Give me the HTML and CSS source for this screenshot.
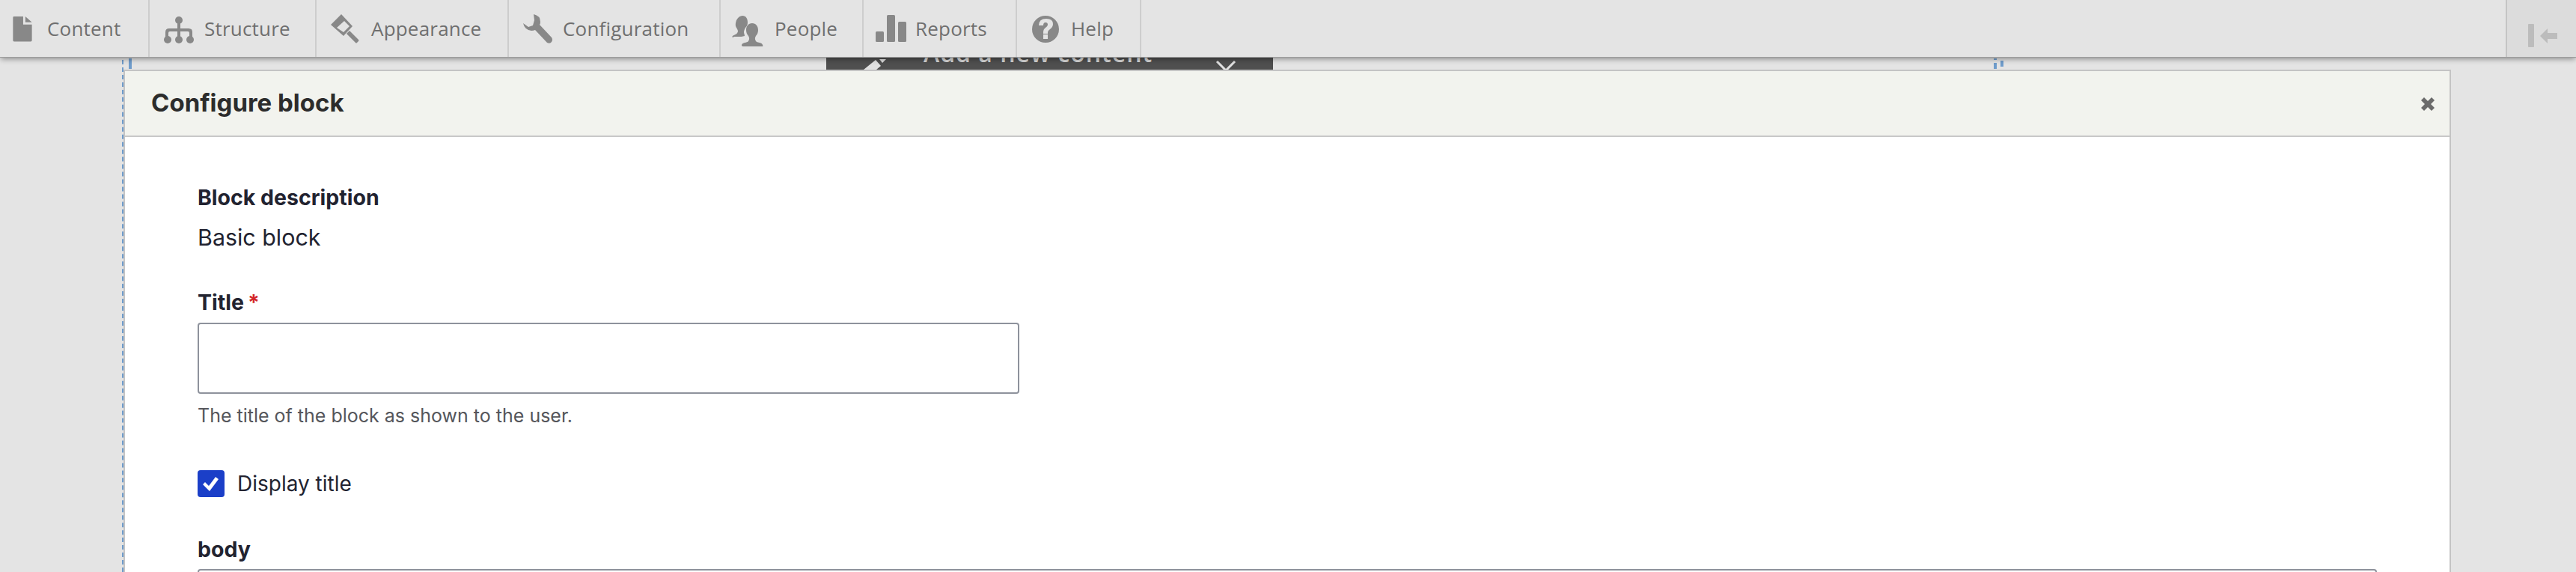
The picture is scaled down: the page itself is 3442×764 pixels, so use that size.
FILE: index.html
```html
<!DOCTYPE html>
<html lang="en">
<head>
  <meta charset="UTF-8">
  <title>Configure block</title>
  <link rel="stylesheet" href="styles.css">
</head>
<body>

  <nav class="toolbar">
    <a class="tab tab-content">
      <svg class="icon" viewBox="0 0 26 36"><path d="M1 0H14V11H26V33a1.500 1.500 0 0 1-1.500 1.500H1.500A1.500 1.500 0 0 1 0 33V1.500A1.500 1.500 0 0 1 1 0ZM17 0L26 8H17Z"/></svg>
      Content
    </a>
    <a class="tab tab-structure">
      <svg class="icon" viewBox="0 0 40 38"><circle cx="20" cy="6" r="5"/><circle cx="5" cy="32" r="5"/><circle cx="20" cy="32" r="5"/><circle cx="35" cy="32" r="5"/><path d="M18 8h4v9h11q5 0 5 5v6h-4v-5q0-2-2-2H22v7h-4v-7H8q-2 0-2 2v5H2v-6q0-5 5-5h11Z"/></svg>
      Structure
    </a>
    <a class="tab tab-appearance">
      <svg class="icon" viewBox="0 0 38 39"><path fill-rule="evenodd" d="M14 0L0 14 17 29 29 16ZM8 18L18 9 25 16 17 24Z"/><path d="M21 26l4-4 12 12q1 1 0 2l-2 2q-1 1-2 0Z"/></svg>
      Appearance
    </a>
    <a class="tab tab-config">
      <svg class="icon" viewBox="0 0 39 39"><path d="M14 0q9 2 9 10 0 3-1 4l16 17q2 3 0 6t-6 1L16 21q-2 1-5 1Q2 21 0 12l7 5 6-2 2-7Z"/></svg>
      Configuration
    </a>
    <a class="tab tab-people">
      <svg class="icon" viewBox="0 0 42 41"><path d="M14 0c5 0 7 4 7 9 0 3-1 5-3 7-1 2-2 4-2 6 0 2 1 3 1 5-3 1-6 1-8 1H3C0 30 0 28 1 27c3-2 6-2 7-6 0-2-1-3-2-5-2-3-1-7 0-10 2-4 5-6 8-6Z"/><path d="M27 10c5 0 8 4 8 9 0 3-1 6-3 8-2 3-1 6 1 8 3 1 7 1 8 4 1 2 0 2-2 2H16c-3 0-3-1-3-2 1-3 5-3 8-4 2-2 3-5 1-8-2-2-3-5-3-8 0-5 3-9 8-9Z"/></svg>
      People
    </a>
    <a class="tab tab-reports">
      <svg class="icon" viewBox="0 0 41 36"><rect x="0" y="22" width="11" height="14" rx="1.500"/><rect x="15" y="0" width="11" height="36" rx="1.500"/><rect x="30" y="9" width="11" height="27" rx="1.500"/></svg>
      Reports
    </a>
    <a class="tab tab-help">
      <svg class="icon" viewBox="0 0 36 36"><path fill-rule="evenodd" d="M18 0a18 18 0 1 1 0 36a18 18 0 1 1 0-36ZM9 13h6q0-4 3-4 3 0 3 3 0 2-3 4-3 2-3 6v2h6v-2q0-2 3-4 4-3 4-7 0-7-9-7-10 0-10 9ZM15 25v6h6v-6Z"/></svg>
      Help
    </a>
    <button class="collapse">
      <svg viewBox="0 0 39 31"><rect x="0" y="0" width="8" height="31" rx="1"/><path d="M16 16L26 6v6h13v8H26v6Z"/></svg>
    </button>
  </nav>

  <div class="stage">
    <div class="block-outline"></div>
    <span class="tick tick-1"></span>
    <span class="tick tick-2"></span>
    <span class="tick tick-3"></span>
    <span class="tick tick-4"></span>
    <div class="add-content">
      <svg class="pencil" viewBox="0 0 34 17"><path d="M0 17L16 4 23 12 17 17ZM21 3H30L25 8Z"/></svg>
      <span class="add-label">Add a new content</span>
      <svg class="chevron" viewBox="0 0 28 14"><path d="M2 1l12 12L26 1"/></svg>
    </div>

    <div class="dialog">
      <header class="dialog-head">
        <h2>Configure block</h2>
        <button class="dialog-close">
          <svg viewBox="0 0 20 20"><path d="M1 5l4-4 5 5 5-5 4 4-5 5 5 5-4 4-5-5-5 5-4-4 5-5Z"/></svg>
        </button>
      </header>
      <form class="dialog-body">
        <div class="field field-desc">
          <div class="label">Block description</div>
          <div class="value">Basic block</div>
        </div>
        <div class="field field-title">
          <label class="label">Title<span class="req">*</span></label>
          <input class="text-input" type="text">
          <div class="help">The title of the block as shown to the user.</div>
        </div>
        <div class="field field-check">
          <span class="checkbox">
            <svg viewBox="0 0 36 36"><path d="M7 19l3-3 5 5L24 9l4 3-12 16Z"/></svg>
          </span>
          <label class="check-label">Display title</label>
        </div>
        <div class="field">
          <label class="label">body</label>
          <div class="editor"></div>
        </div>
      </form>
    </div>
  </div>

</body>
</html>
```

FILE: styles.css
```css
html, body {
  height: 100%;
}

body {
  display: flex;
  flex-direction: column;
  margin: 0;
  overflow: hidden;
  background: #e4e4e4;
  font-family: 'Inter', sans-serif;
  color: #222330;
}

.toolbar {
  display: flex;
  flex: none;
  position: relative;
  z-index: 3;
  height: 76px;
  background: #e4e4e4;
  box-shadow: 0 1px 0 #9c9c9c, 0 4px 7px -1px rgba(0, 0, 0, 0.38);
  font-family: 'Open Sans', sans-serif;
  font-size: 26px;
  color: #6f6f6f;
}

.tab {
  display: flex;
  align-items: center;
  box-sizing: border-box;
  height: 76px;
  border-right: 2px solid #cdcdcd;
  letter-spacing: 0.2px;
}

.tab-content { width: 200px; padding-left: 17px; gap: 20px; }
.tab-structure { width: 223px; padding-left: 19px; gap: 14px; }
.tab-appearance { width: 257px; padding-left: 19px; gap: 16px; }
.tab-config { width: 283px; padding-left: 19px; gap: 14px; }
.tab-people { width: 191px; padding-left: 15px; gap: 15px; }
.tab-reports { width: 205px; padding-left: 16px; gap: 12px; }
.tab-help { width: 166px; padding-left: 20px; gap: 16px; }

.icon {
  display: block;
  flex: none;
  fill: #888888;
}

.tab-content .icon { width: 26px; height: 35px; margin-top: 3px; }
.tab-structure .icon { width: 40px; height: 38px; margin-top: 4px; }
.tab-appearance .icon { width: 38px; height: 39px; margin-top: 1px; }
.tab-config .icon { width: 39px; height: 39px; margin-top: 1px; }
.tab-people .icon { width: 42px; height: 41px; margin-top: 6px; }
.tab-reports .icon { width: 41px; height: 36px; margin-top: 0; }
.tab-help .icon { width: 36px; height: 36px; margin-top: 1px; }

.collapse {
  margin-left: auto;
  width: 94px;
  height: 76px;
  padding: 19px 0 0 28px;
  background: #dcdcdc;
  border: none;
  border-left: 2px solid #c4c4c4;
  text-align: left;
}

.collapse svg {
  display: block;
  width: 39px;
  height: 31px;
  fill: #bcbcbc;
}

.stage {
  flex: 1;
  position: relative;
  min-height: 0;
  overflow: hidden;
  padding: 17px 167px 0 165px;
}

/* page content peeking out behind the dialog */
.block-outline {
  position: absolute;
  top: 4px;
  bottom: 0;
  left: 163px;
  border-left: 2px dashed #6f9ccb;
}

.tick {
  position: absolute;
  width: 4px;
  background: #6f9ccb;
}

.tick-1 { top: 2px; left: 172px; height: 14px; }
.tick-2 { top: 8px; left: 2664px; height: 8px; }
.tick-3 { top: 2px; left: 2664px; height: 2px; }
.tick-4 { top: 5px; left: 2673px; height: 8px; }

.add-content {
  position: absolute;
  top: 0;
  left: 1104px;
  width: 597px;
  height: 17px;
  overflow: hidden;
  background: #4f4f4f;
  color: #d8d8d8;
  font-family: 'Open Sans', sans-serif;
  font-size: 32px;
  font-weight: 600;
  line-height: 36px;
  white-space: nowrap;
}

.pencil {
  position: absolute;
  top: 0;
  left: 50px;
  width: 34px;
  height: 17px;
  fill: #e0e0e0;
}

.add-label {
  position: absolute;
  top: -23px;
  left: 130px;
  letter-spacing: 1px;
}

.chevron {
  position: absolute;
  top: 5px;
  left: 520px;
  width: 28px;
  height: 14px;
  fill: none;
  stroke: #e0e0e0;
  stroke-width: 3px;
}

.dialog {
  position: relative;
  z-index: 1;
  box-sizing: border-box;
  width: 3110px;
  height: 100%;
  overflow: hidden;
  background: #fff;
  border: 2px solid #c4c4c4;
  border-bottom: none;
}

.dialog-head {
  display: flex;
  align-items: center;
  justify-content: space-between;
  box-sizing: border-box;
  height: 88px;
  padding: 0 19px 2px 35px;
  background: #f2f3ee;
  border-bottom: 2px solid #c8c8c8;
}

.dialog-head h2 {
  margin: 0;
  font-size: 33px;
  font-weight: 700;
  color: #2c2c2c;
}

.dialog-close {
  width: 20px;
  height: 20px;
  margin-top: 4px;
  padding: 0;
  background: none;
  border: none;
}

.dialog-close svg {
  display: block;
  fill: #6b6b6b;
}

.dialog-body {
  padding: 63px 97px 0;
}

.field-desc { margin-bottom: 50px; }
.field-title { margin-bottom: 57px; }

.label {
  display: block;
  font-size: 28.5px;
  font-weight: 700;
  line-height: 36px;
  color: #222330;
}

.value {
  margin-top: 16px;
  font-size: 30.4px;
  line-height: 38px;
}

.req {
  margin-left: 5px;
  color: #d3262a;
}

.text-input {
  display: block;
  box-sizing: border-box;
  width: 1098px;
  height: 95px;
  margin-top: 9px;
  background: #fff;
  border: 2px solid #8e929c;
  border-radius: 4px;
}

.help {
  margin-top: 13px;
  font-size: 25px;
  line-height: 32px;
  color: #55565b;
}

.field-check {
  display: flex;
  align-items: center;
  gap: 17px;
  margin-bottom: 52px;
}

.checkbox {
  display: block;
  width: 36px;
  height: 36px;
  background: #1b3fc8;
  border-radius: 4px;
}

.checkbox svg {
  display: block;
  fill: #fff;
}

.check-label {
  font-size: 28px;
  line-height: 36px;
}

.editor {
  box-sizing: border-box;
  height: 200px;
  margin-top: 8px;
  border: 2px solid #8e929c;
  border-radius: 4px;
}
```
